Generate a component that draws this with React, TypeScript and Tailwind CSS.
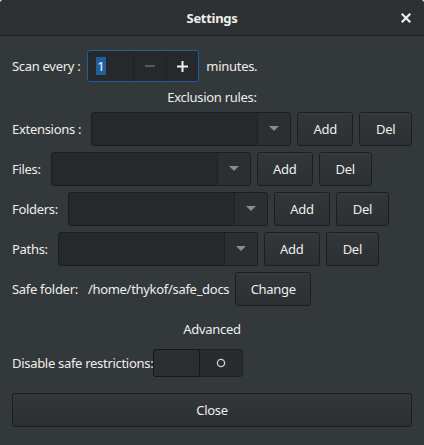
import React from "react";

const font = { fontFamily: '"Noto Sans", "DejaVu Sans", sans-serif' };

function Combo() {
  return (
    <div className="flex h-[34px] w-[200px] rounded-[3px] border border-[#1b1e20] bg-[#25292c] overflow-hidden shrink-0">
      <div className="flex-1" />
      <div className="flex w-[33px] items-center justify-center border-l border-[#1f2326] bg-[#2b2f32]">
        <svg width="10" height="6" viewBox="0 0 10 6">
          <path d="M0 0 L10 0 L5 5 Z" fill="#888c8f" />
        </svg>
      </div>
    </div>
  );
}

function Btn({ children, w }: { children: React.ReactNode; w: string }) {
  return (
    <div
      className={`flex h-[34px] ${w} shrink-0 items-center justify-center rounded-[3px] border border-[#1b1e20] bg-gradient-to-b from-[#32373a] to-[#2c3033] text-[#eeeeec] shadow-[inset_0_1px_0_rgba(255,255,255,0.03)]`}
    >
      {children}
    </div>
  );
}

function RuleRow({ label }: { label: string }) {
  return (
    <div className="flex h-[34px] items-center">
      <span className="mr-[10px] shrink-0 whitespace-nowrap">{label}</span>
      <Combo />
      <div className="ml-[6px]">
        <Btn w="w-[56px]">Add</Btn>
      </div>
      <div className="ml-[6px]">
        <Btn w="w-[53px]">Del</Btn>
      </div>
    </div>
  );
}

export default function App() {
  return (
    <div
      className="w-[424px] h-[445px] bg-[#d8d8d8] text-[13px] tracking-[-0.3px] text-[#eeeeec] leading-[18px] whitespace-nowrap"
      style={font}
    >
      <div className="flex h-full w-full flex-col overflow-hidden rounded-t-[4px] bg-[#33383b]">
        <div className="relative flex h-[36px] shrink-0 items-center justify-center border-b border-[#1c1f21] bg-[#2d3134]">
          <span className="font-bold text-[13px]">Settings</span>
          <svg
            className="absolute right-[13px] top-[13px]"
            width="10"
            height="10"
            viewBox="0 0 10 10"
          >
            <path d="M1.5 1.5 L8.5 8.5 M8.5 1.5 L1.5 8.5" stroke="#eeeeec" strokeWidth="2.2" strokeLinecap="square" />
          </svg>
        </div>

        <div className="flex flex-col px-[12px] pt-[14px]">
          {/* scan row */}
          <div className="flex h-[32px] items-center">
            <span className="mr-[7px]">Scan every :</span>
            <div className="flex h-[32px] w-[112px] rounded-[3px] border border-[#215d9c] bg-[#25292c] overflow-hidden">
              <div className="flex w-[45px] items-center pl-[8px]">
                <span className="bg-[#215d9c] px-[1px] text-white">1</span>
              </div>
              <div className="flex w-[33px] items-center justify-center border-l border-[#1f2326]">
                <svg width="10" height="2" viewBox="0 0 10 2">
                  <rect width="10" height="2" fill="#55595c" />
                </svg>
              </div>
              <div className="flex flex-1 items-center justify-center border-l border-[#1f2326]">
                <svg width="11" height="11" viewBox="0 0 11 11">
                  <rect x="0" y="4.5" width="11" height="2" fill="#eeeeec" />
                  <rect x="4.5" y="0" width="2" height="11" fill="#eeeeec" />
                </svg>
              </div>
            </div>
            <span className="ml-[7px]">minutes.</span>
          </div>

          <div className="mt-[6px] h-[18px] text-center">Exclusion rules:</div>

          <div className="mt-[6px] flex flex-col gap-[6px]">
            <RuleRow label="Extensions :" />
            <RuleRow label="Files:" />
            <RuleRow label="Folders:" />
            <RuleRow label="Paths:" />
            <div className="flex h-[34px] items-center">
              <span className="mr-[10px]">Safe folder:</span>
              <span className="mr-[6px]">/home/thykof/safe_docs</span>
              <Btn w="w-[76px]">Change</Btn>
            </div>
          </div>

          <div className="mt-[14px] h-[18px] text-center">Advanced</div>

          <div className="mt-[11px] flex h-[28px] items-center">
            <span>Disable safe restrictions:</span>
            <div className="flex h-[28px] w-[90px] rounded-[3px] border border-[#1e2123] bg-[#282c2f]">
              <div className="-m-px h-[28px] w-[47px] rounded-[3px] border border-[#151719] bg-[#2b2f32]" />
              <div className="flex flex-1 items-center justify-center">
                <svg width="10" height="10" viewBox="0 0 10 10">
                  <circle cx="5" cy="5" r="3.6" fill="none" stroke="#d0d0ce" strokeWidth="1.3" />
                </svg>
              </div>
            </div>
          </div>

          <div className="mt-[16px]">
            <div className="flex h-[34px] w-full items-center justify-center rounded-[3px] border border-[#1b1e20] bg-gradient-to-b from-[#32373a] to-[#2c3033]">
              Close
            </div>
          </div>
        </div>
      </div>
    </div>
  );
}
